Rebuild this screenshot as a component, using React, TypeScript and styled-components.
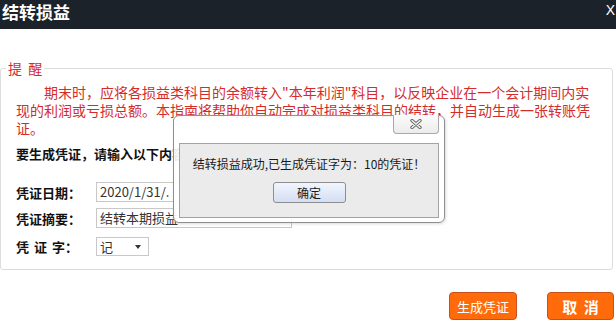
import React from "react";
import styled, { createGlobalStyle } from "styled-components";

const GlobalStyle = createGlobalStyle`
  html, body {
    margin: 0;
    padding: 0;
    background: #ffffff;
  }
  body {
    font-family: "Noto Sans CJK SC", "Liberation Sans", sans-serif;
  }
`;

const Page = styled.div`
  position: relative;
  width: 616px;
  height: 330px;
  overflow: hidden;
`;

const TitleBar = styled.div`
  display: flex;
  justify-content: space-between;
  align-items: flex-start;
  height: 29px;
  padding-left: 2px;
  background-color: #1c2229;
  color: #ffffff;
`;

const Title = styled.h1`
  margin: 0;
  font-size: 17px;
  font-weight: bold;
  line-height: 23px;
`;

const CloseX = styled.span`
  font-family: "Liberation Sans", sans-serif;
  font-size: 14px;
  line-height: 21px;
  margin-right: 1px;
`;

const Body = styled.div`
  padding-top: 30px;
`;

const Notice = styled.fieldset`
  margin: 0 3px 0 0;
  padding: 6px 15px 13px 15px;
  min-width: 0;
  border: 1px solid #dcdcdc;
  border-radius: 3px;
`;

const Legend = styled.legend`
  margin-left: -10px;
  padding: 0 2px;
  color: #d42c2c;
  font-size: 14px;
  line-height: 18px;
  word-spacing: 3px;
`;

const Hint = styled.p`
  margin: 0;
  color: #d42c2c;
  font-size: 14px;
  line-height: 18px;
  text-indent: 28px;
`;

const Prompt = styled.div`
  margin-top: 8px;
  font-size: 13px;
  font-weight: bold;
  line-height: 18px;
  color: #111111;
`;

const FormRow = styled.div<{ $top: number }>`
  display: flex;
  align-items: center;
  margin-top: ${(p) => p.$top}px;
`;

const Label = styled.label`
  width: 80px;
  font-size: 13px;
  font-weight: bold;
  color: #111111;
  word-spacing: 2px;
`;

const TextBox = styled.div<{ $width: number }>`
  box-sizing: border-box;
  width: ${(p) => p.$width}px;
  height: 20px;
  padding: 0 3px;
  border: 1px solid #c8c8c8;
  font-size: 13px;
  line-height: 18px;
  color: #333333;
  white-space: nowrap;
  overflow: hidden;
`;

const SelectBox = styled.div`
  box-sizing: border-box;
  display: flex;
  align-items: center;
  justify-content: space-between;
  width: 53px;
  height: 19px;
  padding: 0 7px 0 3px;
  border: 1px solid #c8c8c8;
  font-size: 13px;
  color: #333333;
`;

const Caret = styled.span`
  width: 0;
  height: 0;
  border-left: 3px solid transparent;
  border-right: 3px solid transparent;
  border-top: 4px solid #333333;
`;

const Actions = styled.div`
  display: flex;
  justify-content: flex-end;
  gap: 30px;
  margin-top: 22px;
  padding-right: 2px;
`;

const ActionButton = styled.button<{ $bold?: boolean }>`
  box-sizing: border-box;
  height: 28px;
  width: ${(p) => (p.$bold ? 67 : 68)}px;
  padding: 0;
  border: 1px solid #c8501a;
  border-radius: 4px;
  background-color: #ff6a0a;
  color: #ffffff;
  font-family: "Noto Sans CJK SC", sans-serif;
  font-size: ${(p) => (p.$bold ? 15 : 13)}px;
  font-weight: ${(p) => (p.$bold ? "bold" : "normal")};
  word-spacing: 3px;
  cursor: pointer;
`;

/* message box drawn over the form */
const MessageFrame = styled.div`
  position: absolute;
  left: 173px;
  top: 115px;
  box-sizing: border-box;
  width: 272px;
  height: 108px;
  padding: 27px 5px 4px 5px;
  border: 1px solid #8f8f8f;
  border-radius: 6px;
  background: rgba(255, 255, 255, 0.92);
  box-shadow: 1px 1px 3px rgba(0, 0, 0, 0.15);
`;

const FrameClose = styled.div`
  position: absolute;
  top: -1px;
  right: 5px;
  box-sizing: border-box;
  width: 46px;
  height: 19px;
  display: flex;
  align-items: center;
  justify-content: center;
  border: 1px solid #a9a9a9;
  border-top: none;
  border-radius: 0 0 4px 4px;
  background: linear-gradient(#fbfbfb, #ececec);
`;

const MessagePanel = styled.div`
  box-sizing: border-box;
  height: 75px;
  padding-top: 11px;
  border: 1px solid #a3a3a3;
  background-color: #ebebec;
  text-align: center;
`;

const MessageText = styled.div`
  font-size: 12px;
  line-height: 18px;
  color: #1a1a1a;
`;

const OkButton = styled.button`
  box-sizing: border-box;
  width: 73px;
  height: 21px;
  margin-top: 9px;
  padding: 0;
  border: 1px solid #8e8e8e;
  border-radius: 3px;
  background: linear-gradient(#f1f5fd, #d4def3);
  font-family: "Noto Sans CJK SC", sans-serif;
  font-size: 12px;
  color: #1a1a1a;
`;

const CrossIcon = () => (
  <svg width="12" height="10" viewBox="0 0 12 10">
    <path d="M2 1.5 L10 8.5 M10 1.5 L2 8.5" stroke="#6d6d6d" strokeWidth="3.4" strokeLinecap="round" />
    <path d="M2 1.5 L10 8.5 M10 1.5 L2 8.5" stroke="#f4f4f4" strokeWidth="1.4" strokeLinecap="round" />
  </svg>
);

export default function App() {
  return (
    <Page>
      <GlobalStyle />
      <TitleBar>
        <Title>结转损益</Title>
        <CloseX>X</CloseX>
      </TitleBar>
      <Body>
        <Notice>
          <Legend>提 醒</Legend>
          <Hint>
            期末时，应将各损益类科目的余额转入"本年利润"科目，以反映企业在一个会计期间内实现的利润或亏损总额。本指南将帮助你自动完成对损益类科目的结转，并自动生成一张转账凭证。
          </Hint>
          <Prompt>要生成凭证，请输入以下内容：</Prompt>
          <FormRow $top={19}>
            <Label>凭证日期：</Label>
            <TextBox $width={196}>2020/1/31/.</TextBox>
          </FormRow>
          <FormRow $top={6}>
            <Label>凭证摘要：</Label>
            <TextBox $width={196}>结转本期损益</TextBox>
          </FormRow>
          <FormRow $top={9}>
            <Label>凭 证 字：</Label>
            <SelectBox>
              记
              <Caret />
            </SelectBox>
          </FormRow>
        </Notice>
        <Actions>
          <ActionButton>生成凭证</ActionButton>
          <ActionButton $bold>取 消</ActionButton>
        </Actions>
      </Body>
      <MessageFrame>
        <FrameClose>
          <CrossIcon />
        </FrameClose>
        <MessagePanel>
          <MessageText>结转损益成功,已生成凭证字为：10的凭证！</MessageText>
          <OkButton>确定</OkButton>
        </MessagePanel>
      </MessageFrame>
    </Page>
  );
}
